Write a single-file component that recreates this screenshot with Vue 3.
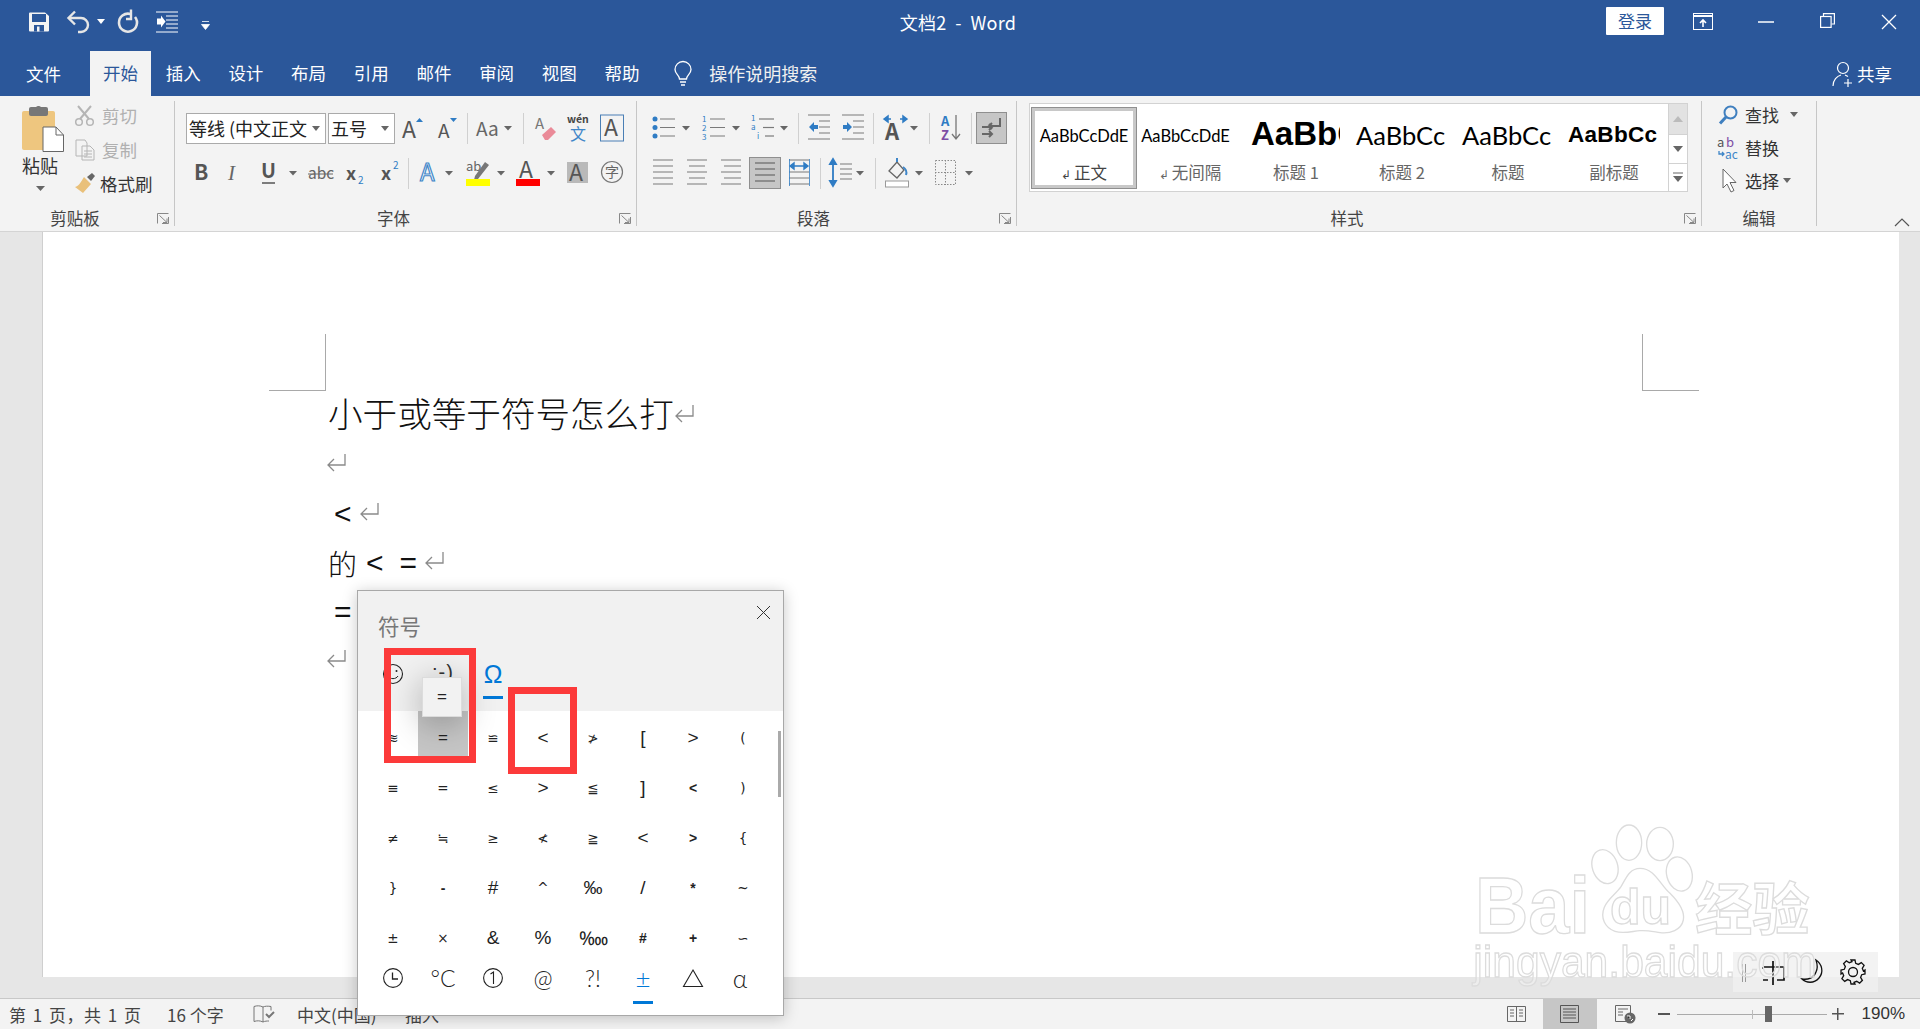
<script setup>
const G = '#555', B = '#2f7cc4', L = '#7a7a7a'
const hl = (x1, x2, ys, c = L) => `<path d="${ys.map(y => `M${x1} ${y}H${x2}`).join('')}" stroke="${c}" stroke-width="1.2" fill="none"/>`
const txt = (x, y, s, t, f = G, extra = '') => `<text x="${x}" y="${y}" font-size="${s}" fill="${f}" ${extra}>${t}</text>`
const nums = (x, arr, c = B) => arr.map(([y, t]) => txt(x, y, 8, t, c)).join('')

const I = {
  caret: `<path d="M1 14h8l-4 4.5z" fill="#666"/>`,
  grow: txt(0, 26, 23, 'A') + `<path d="M14 10l3.500-4 3.500 4z" fill="${B}"/>`,
  shrink: txt(1, 26, 19, 'A') + `<path d="M13 6h7l-3.500 4z" fill="${B}"/>`,
  aa: txt(0, 24, 19, 'Aa', '#666'),
  eraser: txt(0, 17, 15, 'A', '#777') + `<path d="M7 23l9-8 5 5-8 8h-3z" fill="#ea8a98"/>`,
  wen: `<text x="0" y="11" font-size="10.500" font-weight="700" fill="#444">wén</text>` + txt(3, 28, 16, '文', '#3f86c8'),
  boxA: `<rect x=".5" y="3" width="23" height="26" fill="none" stroke="#4a7fb5"/>` + txt(4, 24, 23, 'A'),
  b: `<text x="1" y="23" font-size="21" font-weight="700" fill="${G}">B</text>`,
  i: `<text x="2" y="23" font-size="21" font-style="italic" fill="#666" font-family="Liberation Serif">I</text>`,
  u: txt(0, 21, 20, 'U', G, 'font-weight="700"') + `<path d="M1 26h13" stroke="${G}" stroke-width="1.500"/>`,
  abc: txt(0, 22, 15.500, 'abc', '#666') + `<path d="M0 17h25" stroke="#666"/>`,
  sub: `<text x="0" y="23" font-size="18" font-weight="700" fill="${G}">x</text>` + txt(12, 27, 10, '2', B),
  sup: `<text x="0" y="23" font-size="18" font-weight="700" fill="${G}">x</text>` + txt(12, 12, 10, '2', B),
  glow: `<text x="2" y="24" font-size="24" fill="#fff" stroke="#3f86c8" stroke-width="1.200">A</text>`,
  high: txt(0, 14, 13, 'ab', '#666') + `<path d="M9 19L19 5l4 3-11 14-4 1z" fill="#777"/><rect x="0" y="22" width="24" height="7" fill="#ff0"/>`,
  color: txt(3, 21, 23, 'A') + `<rect x="0" y="22" width="24" height="7" fill="#f00"/>`,
  shaded: `<rect x="0" y="5" width="21" height="21" fill="#b9b9b9"/>` + txt(2, 24, 23, 'A'),
  zi: `<circle cx="11" cy="15" r="10.500" fill="none" stroke="#777" stroke-width="1.200"/>` + txt(4, 20, 14, '字', '#666'),
  bullets: `<circle cx="3" cy="7" r="2.500" fill="${B}"/><circle cx="3" cy="15.500" r="2.500" fill="${B}"/><circle cx="3" cy="24" r="2.500" fill="${B}"/>` + hl(8, 23, [7, 15.5, 24]),
  num: nums(0, [[10, '1'], [19, '2'], [28, '3']]) + hl(8, 23, [7, 15.5, 24]),
  multi: nums(0, [[9, '1'], [18, 'a']]) + nums(6, [[27, 'i']]) + hl(8, 23, [7]) + hl(12, 23, [15.5]) + hl(14, 23, [24]),
  dec: hl(0, 22, [3, 27]) + hl(11, 22, [9, 15, 21]) + `<path d="M1 15l5-5v3h4v4H6v3z" fill="${B}"/>`,
  inc: hl(0, 22, [3, 27]) + hl(11, 22, [9, 15, 21]) + `<path d="M10 15l-5-5v3H1v4h4v3z" fill="${B}"/>`,
  asian: `<text x="2" y="28" font-size="22" font-weight="700" fill="${G}">A</text><path d="M1 7h7M24 7h-7M1 7l4-3v6zM24 7l-4-3v6z" stroke="${B}" stroke-width="1.500" fill="${B}"/>`,
  sort: `<text x="0" y="14" font-size="13" font-weight="700" fill="${B}">A</text><text x="0" y="28" font-size="13" font-weight="700" fill="#7d4ea5">Z</text><path d="M15 3v23M11 22l4 5 4-5" stroke="#777" stroke-width="1.300" fill="none"/>`,
  marks: `<path d="M24 6v8H13M16 11l-3 3 3 3M6 15h10M13 12l3 3-3 3M6 22h10M13 19l3 3-3 3" stroke="#666" stroke-width="2" fill="none"/>`,
  left: hl(0, 20, [3, 9, 15, 21, 27]),
  center: hl(0, 20, [3, 15, 27]) + hl(2, 18, [9, 21]),
  right: hl(0, 20, [3, 15, 27]) + hl(3, 20, [9, 21]),
  just: hl(6, 26, [6, 12, 18, 24], '#555'),
  dist: hl(0, 20, [3, 15, 21, 27]) + `<path d="M1 9h18M1 9l4-3v6zM19 9l-4-3v6z" stroke="${B}" stroke-width="1.400" fill="${B}"/><path d="M.5 2v27M20.500 2v27" stroke="${B}" stroke-width=".8"/>`,
  spacing: hl(11, 23, [7, 12, 17, 22]) + `<path d="M4 3v25M1 7l3-5 3 5zM1 24l3 5 3-5z" stroke="${B}" stroke-width="1.800" fill="${B}"/>`,
  shade: `<path d="M4 14l8-9 7 8-7 8z" fill="none" stroke="#666" stroke-width="1.300"/><path d="M12 5V1M18 10c3 2 4 5 3 8" stroke="#3f86c8" stroke-width="2" fill="none"/><rect x=".5" y="24" width="23" height="6" fill="#fff" stroke="#999"/>`,
  borders: `<rect x=".5" y="3.500" width="20" height="24" fill="none" stroke="#888" stroke-dasharray="1.500 1.500"/><path d="M10.500 3v25M0 15.500h21" stroke="#888" stroke-dasharray="1.500 1.500"/>`
}

const t = (l, r, icon, extra = {}) => ({ l, r, icon, ...extra })
const car = (l) => t(l, l + 10, 'caret')
const sep = (x) => ({ l: x, r: x + 1, sep: true })
const flow = (x0, items) => {
  let p = x0
  return items.map((it) => {
    const o = { ...it, w: it.r - it.l, m: it.l - p }
    p = it.r
    return o
  })
}
const fontRow1 = flow(174, [
  { l: 185, r: 325, sel: '等线 (中文正文' }, { l: 327, r: 394, sel: '五号' },
  t(401, 422, 'grow'), t(436, 457, 'shrink'), sep(466), t(475, 500, 'aa'), car(502), sep(522),
  t(534, 555, 'eraser'), t(566, 590, 'wen'), t(599, 624, 'boxA')
])
const fontRow2 = flow(174, [
  t(192, 208, 'b'), t(225, 241, 'i'), t(260, 276, 'u'), car(287), t(307, 332, 'abc'),
  t(345, 364, 'sub'), t(380, 399, 'sup'), sep(407), t(417, 439, 'glow'), car(443),
  t(465, 489, 'high'), car(495), t(515, 539, 'color'), car(545), t(566, 587, 'shaded'), t(600, 622, 'zi')
])
const paraRow1 = flow(637, [
  t(652, 675, 'bullets'), car(681), t(702, 725, 'num'), car(731), t(751, 775, 'multi'), car(779), sep(798),
  t(808, 831, 'dec'), t(842, 865, 'inc'), sep(873), t(883, 907, 'asian'), car(909), sep(929),
  t(941, 961, 'sort'), sep(971), t(976, 1007, 'marks', { btn: true })
])
const paraRow2 = flow(637, [
  t(653, 674, 'left'), t(687, 708, 'center'), t(721, 742, 'right'), t(749, 781, 'just', { btn: true }),
  t(789, 810, 'dist'), sep(820), t(829, 852, 'spacing'), car(855), sep(875), t(885, 909, 'shade'), car(914),
  t(935, 957, 'borders'), car(964)
])
const fontRows = [fontRow1, fontRow2]
const paraRows = [paraRow1, paraRow2]

const tabs = ['开始', '插入', '设计', '布局', '引用', '邮件', '审阅', '视图', '帮助']
const styles = [
  { s: 'AaBbCcDdE', l: '正文', mark: true, cls: 'st-normal', on: true },
  { s: 'AaBbCcDdE', l: '无间隔', mark: true, cls: 'st-normal' },
  { s: 'AaBbCc', l: '标题 1', cls: 'st-h1' },
  { s: 'AaBbCc', l: '标题 2', cls: 'st-h2' },
  { s: 'AaBbCc', l: '标题', cls: 'st-h2' },
  { s: 'AaBbCc', l: '副标题', cls: 'st-sub' }
]
const glyphs = [
  '≋', '=', '≌', '<', '≯', '[', '>', '(',
  '≡', '=', '≤', '>', '≦', ']', '<', ')',
  '≠', '≒', '≥', '≮', '≧', '<', '>', '{',
  '}', '-', '#', '^', '‰', '/', '*', '~',
  '±', '×', '&', '%', '‱', '#', '+', '∽'
]
const bigIdx = new Set([3, 5, 6, 11, 13, 21, 26, 28, 29, 34, 35, 36])
const smIdx = new Set([14, 22, 30, 37, 38, 25])
const cells = glyphs.map((c, i) => ({ c, big: bigIdx.has(i), sm: smIdx.has(i), on: i === 1 }))
</script>

<template>
  <div class="app">
    <header class="title">
      <div class="qat">
        <svg class="i-save" width="20" height="20" viewBox="0 0 20 20"><path d="M0 1.500V18.500a1 1 0 0 0 1 1H19a1 1 0 0 0 1-1V4L16 .5H1a1 1 0 0 0-1 1z" fill="#f4f4f4"/><rect x="3" y="2" width="14" height="8" fill="#2b579a"/><rect x="5" y="13" width="10" height="6.500" fill="#2b579a"/><rect x="8" y="14.500" width="2.500" height="5" fill="#f4f4f4"/></svg>
        <svg class="i-undo" width="23" height="24" viewBox="0 0 23 24"><path d="M2 8h12a7 7 0 0 1 0 14h-3" fill="none" stroke="#e6e6e6" stroke-width="2.400"/><path d="M8 1.500L1.500 8 8 14.500" fill="none" stroke="#e6e6e6" stroke-width="2.400"/></svg>
        <svg class="i-caret" width="8" height="5" viewBox="0 0 8 5"><path d="M0 0h8L4 5z" fill="#fff"/></svg>
        <svg class="i-redo" width="20" height="24" viewBox="0 0 20 24"><path d="M12.500 5A9 9 0 1 0 17 8" fill="none" stroke="#e6e6e6" stroke-width="2.600"/><path d="M13 .5v9.500H8" fill="none" stroke="#e6e6e6" stroke-width="2.400"/></svg>
        <svg class="i-ind" width="22" height="22" viewBox="0 0 22 22"><path d="M0 1h22M10 5h12M10 9h12M10 13h12M10 17h12M0 21h22" stroke="#fff" stroke-width="1"/><path d="M1 7.500h4v-3l4.500 6L5 16.500v-3H1z" fill="#fff"/></svg>
        <svg class="i-cust" width="9" height="9" viewBox="0 0 9 9"><path d="M1 .5h7M.5 3.500h8L4.500 8.500z" stroke="#fff" fill="#fff" stroke-width=".8"/></svg>
      </div>
      <div class="doc-name">文档2&nbsp; -&nbsp; Word</div>
      <div class="win">
        <span class="login">登录</span>
        <svg class="w1" width="20" height="17" viewBox="0 0 20 17"><rect x=".5" y=".5" width="19" height="16" fill="none" stroke="#fff"/><path d="M.5 3h19" stroke="#fff" stroke-width="2"/><path d="M10 14V7M7 10l3-3 3 3" stroke="#fff" stroke-width="1.600" fill="none"/></svg>
        <svg class="w2" width="16" height="2" viewBox="0 0 16 2"><path d="M0 1h16" stroke="#fff" stroke-width="1.500"/></svg>
        <svg class="w3" width="15" height="15" viewBox="0 0 15 15"><rect x=".6" y="3.500" width="10.500" height="10.900" fill="none" stroke="#fff" stroke-width="1.200"/><path d="M3.500 3V.6h10.900V11H11.500" fill="none" stroke="#fff" stroke-width="1.200"/></svg>
        <svg class="w4" width="14" height="14" viewBox="0 0 14 14"><path d="M0 0l14 14M14 0L0 14" stroke="#fff" stroke-width="1.300"/></svg>
      </div>
    </header>

    <nav class="tabs">
      <span class="file">文件</span>
      <span v-for="(x, i) in tabs" :key="x" class="tab" :class="{ active: i === 0 }">{{ x }}</span>
      <svg class="bulb" width="18" height="24" viewBox="0 0 18 24"><path d="M5.500 17c0-4-4.500-5-4.500-9.500a8 8 0 0 1 16 0c0 4.500-4.500 5.500-4.500 9.500z" fill="none" stroke="#fff" stroke-width="1.300"/><path d="M6 20h6M7 23h4" stroke="#fff" stroke-width="1.500"/></svg>
      <span class="search">操作说明搜索</span>
      <span class="share">
        <svg width="22" height="26" viewBox="0 0 22 26"><circle cx="11" cy="7" r="5.500" fill="none" stroke="#fff" stroke-width="1.200"/><path d="M1 25c0-6 4-10 8-11M13 14l3 1.500M16 18v8M12 22h8" fill="none" stroke="#fff" stroke-width="1.200"/></svg>
        共享
      </span>
    </nav>

    <section class="ribbon">
      <div class="group g-clip">
        <div class="clip-body">
          <div class="paste">
            <svg width="42" height="46" viewBox="0 0 42 46"><rect x="0" y="5" width="33" height="39" rx="2" fill="#eec67f"/><rect x="7" y="1" width="19" height="9" rx="2" fill="#777"/><rect x="14" y="0" width="5" height="5" rx="2" fill="#777"/><path d="M21 21h13l7.500 8v16.500H21z" fill="#fff" stroke="#666"/><path d="M34 21v8h7.500" fill="none" stroke="#666"/></svg>
            <span class="paste-t">粘贴</span>
            <svg class="paste-c" width="9" height="5" viewBox="0 0 9 5"><path d="M0 0h9L4.500 5z" fill="#666"/></svg>
          </div>
          <div class="clip-col">
            <div class="clip-row off">
              <svg width="20" height="21" viewBox="0 0 20 21"><path d="M3 1l11 13M16 1L5 14" stroke="#b5b5b5" stroke-width="2" fill="none"/><circle cx="4" cy="17" r="3.300" fill="none" stroke="#b5b5b5" stroke-width="1.500"/><circle cx="15" cy="17" r="3.300" fill="none" stroke="#b5b5b5" stroke-width="1.500"/></svg>
              剪切
            </div>
            <div class="clip-row off">
              <svg width="20" height="21" viewBox="0 0 20 21"><path d="M1 1h9l2 3v13H1zM7 7h8l4 4v10H7z" fill="#f3f3f3" stroke="#b5b5b5"/><path d="M9 12h8M9 15h8M9 18h8" stroke="#b5b5b5"/></svg>
              复制
            </div>
            <div class="clip-row">
              <svg width="24" height="24" viewBox="0 0 24 24"><path d="M14 6l5-4 3 3-4 5z" fill="#666"/><path d="M11 6l7 7-8 9-8-6c4-1 6-5 9-10z" fill="#e9c07a"/></svg>
              格式刷
            </div>
          </div>
        </div>
        <div class="g-label pad">剪贴板</div>
        <svg class="launch" width="12" height="11" viewBox="0 0 12 11"><path d="M.5 10.500V.5H11.500M11.500 4v6.500H5M2.500 2.500l7.500 7M10 5.500v4H6" fill="none" stroke="#888"/></svg>
      </div>

      <div class="group g-font">
        <div class="tool-rows">
          <div v-for="(r, ri) in fontRows" :key="ri" class="tool-row">
            <template v-for="(it, i) in r" :key="i">
              <span v-if="it.sel" class="select" :style="{ marginLeft: it.m + 'px', width: it.w + 'px' }"><span class="sel-t">{{ it.sel }}</span><svg width="8" height="5" viewBox="0 0 8 5"><path d="M0 0h8L4 5z" fill="#666"/></svg></span>
              <span v-else-if="it.sep" class="sep" :style="{ marginLeft: it.m + 'px' }"></span>
              <span v-else class="tool" :style="{ marginLeft: it.m + 'px' }"><svg :width="it.w" height="32" :viewBox="`0 0 ${it.w} 32`" v-html="I[it.icon]"></svg></span>
            </template>
          </div>
        </div>
        <div class="g-label pad">字体</div>
        <svg class="launch" width="12" height="11" viewBox="0 0 12 11"><path d="M.5 10.500V.5H11.500M11.500 4v6.500H5M2.500 2.500l7.500 7M10 5.500v4H6" fill="none" stroke="#888"/></svg>
      </div>

      <div class="group g-para">
        <div class="tool-rows">
          <div v-for="(r, ri) in paraRows" :key="ri" class="tool-row">
            <template v-for="(it, i) in r" :key="i">
              <span v-if="it.sep" class="sep" :style="{ marginLeft: it.m + 'px' }"></span>
              <span v-else class="tool" :class="{ btn: it.btn }" :style="{ marginLeft: it.m + 'px' }"><svg :width="it.w" height="32" :viewBox="`0 0 ${it.w} 32`" v-html="I[it.icon]"></svg></span>
            </template>
          </div>
        </div>
        <div class="g-label pad2">段落</div>
        <svg class="launch" width="12" height="11" viewBox="0 0 12 11"><path d="M.5 10.500V.5H11.500M11.500 4v6.500H5M2.500 2.500l7.500 7M10 5.500v4H6" fill="none" stroke="#888"/></svg>
      </div>

      <div class="group g-style">
        <div class="gallery">
          <div class="st-list">
            <div v-for="s in styles" :key="s.l" class="st" :class="{ on: s.on }">
              <div class="st-clip"><div class="st-s" :class="s.cls">{{ s.s }}</div></div>
              <div class="st-l"><span v-if="s.mark" class="st-m">↲</span>{{ s.l }}</div>
            </div>
          </div>
          <div class="st-scroll">
            <span class="sb up"><svg width="10" height="6" viewBox="0 0 10 6"><path d="M0 6h10L5 0z" fill="#bbb"/></svg></span>
            <span class="sb"><svg width="10" height="6" viewBox="0 0 10 6"><path d="M0 0h10L5 6z" fill="#666"/></svg></span>
            <span class="sb"><svg width="10" height="10" viewBox="0 0 10 10"><path d="M0 1h10" stroke="#666"/><path d="M0 4h10L5 10z" fill="#666"/></svg></span>
          </div>
        </div>
        <div class="g-label st-label">样式</div>
        <svg class="launch" width="12" height="11" viewBox="0 0 12 11"><path d="M.5 10.500V.5H11.500M11.500 4v6.500H5M2.500 2.500l7.500 7M10 5.500v4H6" fill="none" stroke="#888"/></svg>
      </div>

      <div class="group g-edit">
        <div class="edit-col">
          <div class="edit-row">
            <svg width="19" height="20" viewBox="0 0 19 20"><circle cx="11.500" cy="7.500" r="6" fill="none" stroke="#3f7fbf" stroke-width="2"/><path d="M7 12l-6 6.500" stroke="#3f7fbf" stroke-width="3"/></svg>
            <span>查找</span>
            <svg class="ec1" width="8" height="5" viewBox="0 0 8 5"><path d="M0 0h8L4 5z" fill="#666"/></svg>
          </div>
          <div class="edit-row">
            <svg class="rep" width="24" height="24" viewBox="0 0 24 24"><text x="0" y="11" font-size="13" fill="#555">a</text><text x="9" y="11" font-size="13" fill="#7d4ea5">b</text><path d="M2 15v3h5M5 16l2 2-2 2" stroke="#3f86c8" fill="none" stroke-width="1.300"/><text x="8" y="23" font-size="12" fill="#3f86c8">ac</text></svg>
            <span>替换</span>
          </div>
          <div class="edit-row">
            <svg width="19" height="26" viewBox="0 0 19 26"><path d="M4 1v19l4-4 4 8 3-1.500-4-8h6z" fill="#fff" stroke="#666"/></svg>
            <span>选择</span>
            <svg class="ec2" width="8" height="5" viewBox="0 0 8 5"><path d="M0 0h8L4 5z" fill="#666"/></svg>
          </div>
        </div>
        <div class="g-label">编辑</div>
      </div>
      <svg class="collapse" width="16" height="9" viewBox="0 0 16 9"><path d="M1 8l7-7 7 7" fill="none" stroke="#555" stroke-width="1.200"/></svg>
    </section>

    <main class="doc">
      <div class="page">
        <span class="crop c-l"></span>
        <span class="crop c-r"></span>
        <div class="para t1">小于或等于符号怎么打<svg class="mk" width="19" height="18" viewBox="0 0 19 18"><path d="M18 0v11H1M7 5l-6 6 6 6" fill="none" stroke="#8a8a8a" stroke-width="1.300"/></svg></div>
        <div class="para"><svg class="mk" width="19" height="18" viewBox="0 0 19 18"><path d="M18 0v11H1M7 5l-6 6 6 6" fill="none" stroke="#8a8a8a" stroke-width="1.300"/></svg></div>
        <div class="para ind"><span class="sym">&lt;</span><svg class="mk m1" width="19" height="18" viewBox="0 0 19 18"><path d="M18 0v11H1M7 5l-6 6 6 6" fill="none" stroke="#8a8a8a" stroke-width="1.300"/></svg></div>
        <div class="para"><span class="de">的</span><span class="sym s1">&lt;</span><span class="sym s2">=</span><svg class="mk m2" width="19" height="18" viewBox="0 0 19 18"><path d="M18 0v11H1M7 5l-6 6 6 6" fill="none" stroke="#8a8a8a" stroke-width="1.300"/></svg></div>
        <div class="para ind"><span class="sym">=</span></div>
        <div class="para"><svg class="mk" width="19" height="18" viewBox="0 0 19 18"><path d="M18 0v11H1M7 5l-6 6 6 6" fill="none" stroke="#8a8a8a" stroke-width="1.300"/></svg></div>
      </div>
    </main>

    <footer class="status">
      <span class="s-a">第 1 页，共 1 页</span>
      <span class="s-b">16 个字</span>
      <svg class="s-c" width="22" height="18" viewBox="0 0 22 18"><path d="M1 1.500c3-1 6-1 9 .5v15c-3-1.500-6-1.500-9-.5zM10 2c2-1 5-1 8-.5v4M10 17c2-1 4-1 6-1" fill="none" stroke="#777"/><path d="M13 9l3 3 5-5" fill="none" stroke="#777" stroke-width="2"/></svg>
      <span class="s-d">中文(中国)</span>
      <span class="s-e">插入</span>
      <div class="s-right">
        <svg class="v1" width="19" height="18" viewBox="0 0 19 18"><path d="M.5 1.500h18v15H.5zM9.500 1.500v15M3 5h4M3 8h4M3 11h4M12 5h4M12 8h4M12 11h4" fill="none" stroke="#666"/></svg>
        <span class="v2"><svg width="19" height="18" viewBox="0 0 19 18"><path d="M.5.5h18v17H.5zM3 4h13M3 7h13M3 10h13M3 13h13" fill="none" stroke="#555"/></svg></span>
        <svg class="v3" width="21" height="19" viewBox="0 0 21 19"><path d="M.5.5h15v16H.5zM3 4h10M3 7h5M3 10h5" fill="none" stroke="#666"/><circle cx="15" cy="13" r="5.500" fill="#666"/><path d="M12 11h3v3M16 16l2-2" stroke="#fff"/></svg>
        <span class="z-minus"></span>
        <span class="slider"><span class="tick"></span><span class="thumb"></span></span>
        <span class="z-plus"></span>
        <span class="pct">190%</span>
      </div>
    </footer>

    <div class="float">
      <span class="f-bar"></span>
      <svg width="24" height="24" viewBox="0 0 24 24"><path d="M11 0v24M1 6h21M22 6v13H15M1 6v2M1 19h5" fill="none" stroke="#111" stroke-width="1.700"/></svg>
      <svg width="24" height="24" viewBox="0 0 24 24"><path d="M15 1c6 4 8 12 3 18s-13 5-17 1c6 1 12-1 14-7 2-4 1-9 0-12z" fill="none" stroke="#111" stroke-width="1.300"/></svg>
      <svg width="26" height="26" viewBox="0 0 26 26"><circle cx="13" cy="13" r="4.500" fill="none" stroke="#111" stroke-width="1.300"/><path d="M11 1h4l.7 3.300 2.700 1.100 2.900-1.800 2.800 2.800-1.800 2.900 1.100 2.700L25 11v4l-3.300.7-1.100 2.700 1.800 2.900-2.800 2.800-2.900-1.800-2.700 1.100L15 25h-4l-.7-3.300-2.700-1.100-2.900 1.800-2.800-2.800 1.800-2.900-1.100-2.700L1 15v-4l3.300-.7 1.100-2.700L3.600 4.700l2.800-2.800 2.900 1.800 2.700-1.100z" fill="none" stroke="#111" stroke-width="1.300"/></svg>
    </div>

    <svg class="wm" width="500" height="249" viewBox="0 0 1500 747">
      <g fill="rgba(255,255,255,.3)" stroke="#dcdcdc" stroke-width="4">
        <ellipse cx="627" cy="188" rx="38" ry="53"/>
        <ellipse cx="720" cy="192" rx="40" ry="50"/>
        <ellipse cx="555" cy="260" rx="38" ry="52" transform="rotate(-18 555 260)"/>
        <ellipse cx="778" cy="282" rx="38" ry="52" transform="rotate(-15 778 282)"/>
        <path d="M660 265c45 0 60 50 90 75 30 30 45 55 40 80-6 30-40 42-70 38-20-3-40-8-60-6-25 2-50 10-75 2-30-10-45-40-32-72 10-25 35-40 50-62 15-25 25-55 57-55z"/>
        <text x="165" y="458" font-size="240" font-weight="700" textLength="345" lengthAdjust="spacingAndGlyphs">Bai</text>
        <text x="570" y="432" font-size="150" font-weight="700">du</text>
        <text x="825" y="450" font-size="172" font-weight="700">经验</text>
        <text x="160" y="590" font-size="135" textLength="1030" lengthAdjust="spacingAndGlyphs">jingyan.baidu.com</text>
      </g>
    </svg>

    <aside class="panel">
      <div class="p-head">
        <div class="p-top"><span class="p-title">符号</span>
          <svg width="13" height="13" viewBox="0 0 13 13"><path d="M0 0l13 13M13 0L0 13" stroke="#333" stroke-width="1"/></svg>
        </div>
        <div class="p-tabs">
          <span class="p-tab"><svg width="20" height="20" viewBox="0 0 20 20"><circle cx="10" cy="10" r="9.500" fill="none" stroke="#222" stroke-width="1.100"/><circle cx="6.500" cy="7" r="1" fill="#222"/><circle cx="13.500" cy="7" r="1" fill="#222"/><path d="M5 12c2 3.500 8 3.500 10 0" fill="none" stroke="#222"/></svg></span>
          <span class="p-tab kao">;-)</span>
          <span class="p-tab omega">Ω<i></i></span>
        </div>
      </div>
      <div class="grid">
        <span v-for="(c, i) in cells" :key="i" class="cell" :class="{ big: c.big, sm: c.sm, on: c.on }">{{ c.c }}</span>
      </div>
      <div class="p-foot">
        <span class="f-cell"><svg width="20" height="20" viewBox="0 0 20 20"><circle cx="10" cy="10" r="9.400" fill="none" stroke="#222" stroke-width="1.100"/><path d="M9.500 4.500V11H15" fill="none" stroke="#222" stroke-width="1.300"/></svg></span>
        <span class="f-cell ft">°C</span>
        <span class="f-cell"><svg width="20" height="20" viewBox="0 0 20 20"><circle cx="10" cy="10" r="9.400" fill="none" stroke="#222" stroke-width="1.100"/><path d="M7.500 6l3-2v12" fill="none" stroke="#222" stroke-width="1.100"/></svg></span>
        <span class="f-cell ft">@</span>
        <span class="f-cell ft">?!</span>
        <span class="f-cell ft act">±<i></i></span>
        <span class="f-cell"><svg width="20" height="18" viewBox="0 0 20 18"><path d="M10 1L19.500 17.500H.5z" fill="none" stroke="#222" stroke-width="1.100"/></svg></span>
        <span class="f-cell ft alpha">α</span>
      </div>
      <span class="tip">=</span>
      <span class="red r1"></span>
      <span class="red r2"></span>
      <span class="scroll"></span>
    </aside>
  </div>
</template>

<style>
html, body { margin: 0; padding: 0; background: #e6e6e6; overflow: hidden; }
</style>

<style scoped>
.app {
  width: 1920px; height: 1029px; position: relative; overflow: hidden;
  font-family: "Noto Sans CJK SC", "Liberation Sans", sans-serif; color: #333; background: #e6e6e6;
}
svg { display: block; flex: none; overflow: visible; }
.title { height: 51px; background: #2b579a; display: grid; grid-template-columns: 1fr auto 1fr; color: #fff; }
.qat { display: flex; align-items: flex-start; padding-left: 29px; }
.i-save { margin-top: 12px; }
.i-undo { margin: 10px 0 0 18px; }
.i-caret { margin: 19px 0 0 7px; }
.i-redo { margin: 9px 0 0 13px; }
.i-ind { margin: 11px 0 0 18px; }
.i-cust { margin: 21px 0 0 23px; }
.doc-name { height: 44px; line-height: 44px; font-size: 18px; padding-right: 4px; letter-spacing: .3px; white-space: pre; }
.win { display: flex; align-items: flex-start; justify-content: flex-end; position: relative; padding-right: 24px; }
.login { width: 58px; height: 28px; margin-top: 7px; background: #fff; color: #2b579a; font-size: 17px; line-height: 27px; text-align: center; border-radius: 1px; }
.w1 { margin: 13px 0 0 29px; }
.w2 { margin: 21px 0 0 45px; }
.w3 { margin: 13px 0 0 46px; }
.w4 { margin: 15px 0 0 47px; }
.tabs { height: 45px; background: #2b579a; display: flex; align-items: center; color: #fff; font-size: 17.500px; position: relative; }
.file { width: 90px; padding-left: 26px; box-sizing: border-box; line-height: 43px; }
.tab { width: 61px; height: 45px; line-height: 43px; text-align: center; margin-right: 1.700px; flex: none; }
.tab.active { background: #f3f3f3; color: #2b579a; }
.bulb { margin-left: 20px; }
.search { margin-left: 17px; font-size: 18px; color: #f0f0f0; line-height: 41px; }
.share { margin-left: auto; margin-right: 28px; display: flex; align-items: center; gap: 3px; }
.ribbon { background: #f3f3f3; border-bottom: 1px solid #d4d4d4; display: flex; align-items: flex-start; padding-top: 5px; height: 130px; position: relative; }
.group { height: 125px; box-sizing: border-box; border-right: 1px solid #c6c6c6; position: relative; display: flex; flex-direction: column; flex: none; }
.g-clip { width: 175px; } .g-font { width: 462px; } .g-para { width: 380px; } .g-style { width: 685px; } .g-edit { width: 115px; }
.g-label { margin-top: auto; height: 16px; line-height: 16px; text-align: center; font-size: 16.500px; color: #444; }
.pad { padding-right: 24px; } .pad2 { padding-right: 26px; }
.launch { position: absolute; right: 5px; bottom: 2px; }
.clip-body { display: flex; height: 99px; }
.paste { width: 76px; padding-left: 22px; box-sizing: border-box; margin-top: 5px; display: flex; flex-direction: column; }
.paste-t { width: 42px; text-align: center; font-size: 18px; line-height: 22px; margin: 2px 0 0 -3px; color: #333; }
.paste-c { margin: 10px 0 0 14px; }
.clip-col { display: flex; flex-direction: column; margin-top: -3px; }
.clip-row { height: 34px; display: flex; align-items: center; font-size: 17.500px; gap: 5px; color: #333; width: 95px; margin-left: -1px; }
.clip-row.off { color: #b0b0b0; gap: 7px; }
.clip-row:last-child { margin-left: -3px; gap: 3px; }
.tool-rows { padding-top: 5px; display: flex; flex-direction: column; gap: 1px; }
.tool-row { height: 44px; display: flex; align-items: center; }
.tool { flex: none; display: block; }
.tool.btn { background: #c6c6c6; box-shadow: inset 0 0 0 1px #8f8f8f; }
.sep { width: 1px; height: 31px; background: #d0d0d0; flex: none; }
.select { height: 31px; box-sizing: border-box; border: 1px solid #aaa; background: #fff; display: flex; align-items: center; justify-content: space-between; padding: 0 5px 0 2px; font-size: 18px; color: #222; overflow: hidden; flex: none; }
.sel-t { white-space: nowrap; line-height: 27px; }
.gallery { margin: 2px 0 0 12px; width: 659px; height: 89px; box-sizing: border-box; border: 1px solid #d2d2d2; background: #fff; display: flex; }
.st-list { display: flex; padding: 3px 0 0 1px; width: 637px; flex: none; }
.st { width: 106px; height: 82px; box-sizing: border-box; text-align: center; flex: none; overflow: hidden; }
.st.on { border: 4px solid #c8c8c8; outline: 1px solid #8f8f8f; outline-offset: -1px; }
.st-clip { width: 97px; overflow: hidden; height: 50px; }
.st.on .st-clip { width: 98px; height: 46px; }
.st-s { height: 50px; line-height: 58px; white-space: nowrap; color: #000; font-family: "Lato", "Liberation Sans", sans-serif; font-weight: 400; font-size: 16.500px; text-align: center; }
.st.on .st-s { line-height: 50px; }
.st-h1 { font-family: "Liberation Sans", sans-serif; font-size: 33px; font-weight: 700; line-height: 54px; text-align: left; padding-left: 8px; }
.st-h2 { font-size: 25.500px; text-align: left; padding-left: 7px; line-height: 56px; }
.st-sub { font-size: 22.500px; font-family: "Liberation Sans", sans-serif; font-weight: 700; text-align: left; padding-left: 7px; letter-spacing: .3px; line-height: 56px; }
.st-l { font-size: 16.500px; line-height: 22px; color: #666; margin-top: 4px; }
.st.on .st-l { color: #444; margin-top: 4px; }
.st-m { font-size: 12px; margin-right: 3px; }
.st-scroll { flex: 1; display: flex; flex-direction: column; border-left: 1px solid #d2d2d2; }
.sb { flex: 1; display: flex; align-items: center; justify-content: center; border-bottom: 1px solid #d2d2d2; }
.sb:last-child { border-bottom: 0; }
.sb.up { background: #e2e2e2; flex: 1.100; }
.st-label { padding-right: 24px; }
.edit-col { display: flex; flex-direction: column; padding: 0 0 0 17px; height: 99px; margin-top: -3px; font-size: 17px; }
.edit-row { height: 33px; display: flex; align-items: center; gap: 7px; color: #333; }
.edit-row:nth-child(2) { margin-left: -2px; gap: 4px; }
.edit-row .ec1 { margin-left: 4px; }
.edit-row .ec2 { margin-left: -3px; }
.collapse { position: absolute; left: 1894px; top: 122px; }
.doc { height: 766px; box-sizing: border-box; padding-left: 42px; padding-right: 21px; }
.page { height: 745px; background: #fff; border-left: 1px solid #cfcfcf; padding: 159px 0 0 283px; position: relative; box-sizing: border-box; }
.crop { position: absolute; top: 102px; width: 57px; height: 57px; box-sizing: border-box; border: 0 solid #a9a9a9; }
.c-l { left: 226px; border-width: 0 1px 1px 0; }
.c-r { left: 1599px; border-width: 0 0 1px 1px; }
.para { height: 49px; display: flex; align-items: center; font-size: 34.600px; color: #111; font-weight: 300; white-space: nowrap; }
.para.t1 { line-height: 49px; padding: 0 0 6px 2px; box-sizing: border-box; }
.para.t1 .mk { margin-top: 3px; }
.mk { margin: -3px 0 0 1px; }
.ind { padding-left: 8px; }
.sym { font-family: "Liberation Sans", sans-serif; font-size: 30px; font-weight: 400; line-height: 1; width: 17.500px; }
.de { font-size: 29px; margin-left: 2px; }
.s1 { margin-left: 9px; }
.s2 { margin-left: 16px; }
.m1 { margin-left: 8px; }
.m2 { margin-left: 8px; }
.status { height: 31px; box-sizing: border-box; border-top: 1px solid #c8c8c8; background: #f3f3f3; display: flex; align-items: center; font-size: 17px; color: #444; position: relative; }
.s-a { margin-left: 9px; width: 158px; flex: none; word-spacing: 2px; letter-spacing: .5px; }
.s-b { width: 86px; flex: none; }
.s-c { margin-right: 22px; }
.s-d { width: 108px; flex: none; }
.s-e { width: 40px; flex: none; }
.s-right { margin-left: auto; display: flex; align-items: center; height: 30px; }
.v1 { margin-right: 17px; }
.v2 { width: 54px; height: 30px; background: #c6c6c6; display: flex; align-items: center; justify-content: center; }
.v3 { margin-left: 18px; }
.z-minus { width: 12px; height: 1.500px; background: #555; margin-left: 22px; }
.slider { width: 150px; height: 1px; background: #aaa; margin-left: 7px; position: relative; }
.tick { position: absolute; left: 75px; top: -4px; width: 1px; height: 9px; background: #bbb; }
.thumb { position: absolute; left: 88px; top: -8px; width: 7px; height: 16px; background: #666; }
.z-plus { width: 12px; height: 12px; margin-left: 5px; background: linear-gradient(#555, #555) center/12px 1.500px no-repeat, linear-gradient(#555, #555) center/1.500px 12px no-repeat; }
.pct { margin-left: 18px; margin-right: 15px; font-size: 17px; font-family: "Liberation Sans", sans-serif; color: #333; }
.wm { position: absolute; left: 1420px; top: 780px; filter: blur(.5px); font-family: "Liberation Sans", "Noto Sans CJK SC", sans-serif; pointer-events: none; }
.float { position: absolute; left: 1733px; top: 952px; width: 145px; height: 40px; background: rgba(240, 240, 240, .8); display: flex; align-items: center; }
.f-bar { width: 4px; height: 18px; margin: 2px 0 0 9px; border-left: 1px solid #999; border-right: 1px solid #999; box-sizing: border-box; }
.float svg:nth-of-type(1) { margin: 2px 0 0 16px; }
.float svg:nth-of-type(2) { margin: -3px 0 0 15px; }
.float svg:nth-of-type(3) { margin: -1px 0 0 15px; }
.panel { position: absolute; left: 357px; top: 590px; width: 427px; height: 426px; box-sizing: border-box; border: 1px solid #a8a8a8; background: #fff; box-shadow: 0 2px 14px rgba(0, 0, 0, .22); display: flex; flex-direction: column; }
.p-head { height: 120px; background: #f1f1f1; flex: none; }
.p-top { display: flex; justify-content: space-between; align-items: flex-start; padding: 15px 13px 0 20px; height: 58px; box-sizing: border-box; }
.p-title { font-size: 21.500px; color: #777; line-height: 40px; }
.p-tabs { display: flex; padding-left: 10px; }
.p-tab { width: 50px; height: 50px; display: flex; align-items: center; justify-content: center; position: relative; font-size: 20px; }
.kao { font-family: "Liberation Sans", sans-serif; align-items: flex-start; padding-top: 12px; box-sizing: border-box; letter-spacing: 1px; }
.omega { color: #0078d7; font-family: "Liberation Sans", sans-serif; font-size: 25px; }
.omega i { position: absolute; left: 15px; top: 47px; width: 20px; height: 3px; background: #0078d7; }
.grid { display: grid; grid-template-columns: repeat(8, 50px); grid-auto-rows: 50px; padding: 2px 0 0 10px; height: 242px; box-sizing: border-box; }
.cell { display: flex; align-items: center; justify-content: center; font-family: "DejaVu Sans", sans-serif; font-size: 13.500px; color: #222; }
.cell.big { font-family: "Liberation Sans", sans-serif; font-size: 19px; font-weight: 400; }
.cell.sm { font-family: "Liberation Sans", sans-serif; font-size: 14px; font-weight: 700; }
.cell.on { background: #c6c6c6; height: 45px; margin-top: -2px; padding-top: 9px; box-sizing: border-box; font-family: "Liberation Sans", sans-serif; font-size: 17px; }
.p-foot { display: flex; padding-left: 10px; height: 50px; }
.f-cell { width: 50px; height: 50px; display: flex; align-items: center; justify-content: center; position: relative; }
.ft { font-family: "Lato", "Liberation Sans", sans-serif; font-weight: 300; font-size: 23px; color: #222; }
.act { color: #0078d7; font-size: 26px; }
.act i { position: absolute; left: 15px; top: 48px; width: 20px; height: 3px; background: #0078d7; }
.alpha { font-size: 25px; padding-right: 6px; box-sizing: border-box; }
.tip { position: absolute; left: 64px; top: 86px; width: 40px; height: 40px; box-sizing: border-box; background: #f2f2f2; border: 1px solid #dcdcdc; box-shadow: 0 6px 34px rgba(0, 0, 0, .3); display: flex; align-items: center; justify-content: center; font-family: "Liberation Sans", sans-serif; font-size: 17px; color: #222; }
.red { position: absolute; box-sizing: border-box; border: 7px solid #fc3a3a; }
.r1 { left: 26px; top: 57px; width: 92px; height: 115px; }
.r2 { left: 150px; top: 96px; width: 69px; height: 87px; }
.scroll { position: absolute; left: 420px; top: 140px; width: 3px; height: 66px; background: #aaa; }
</style>
